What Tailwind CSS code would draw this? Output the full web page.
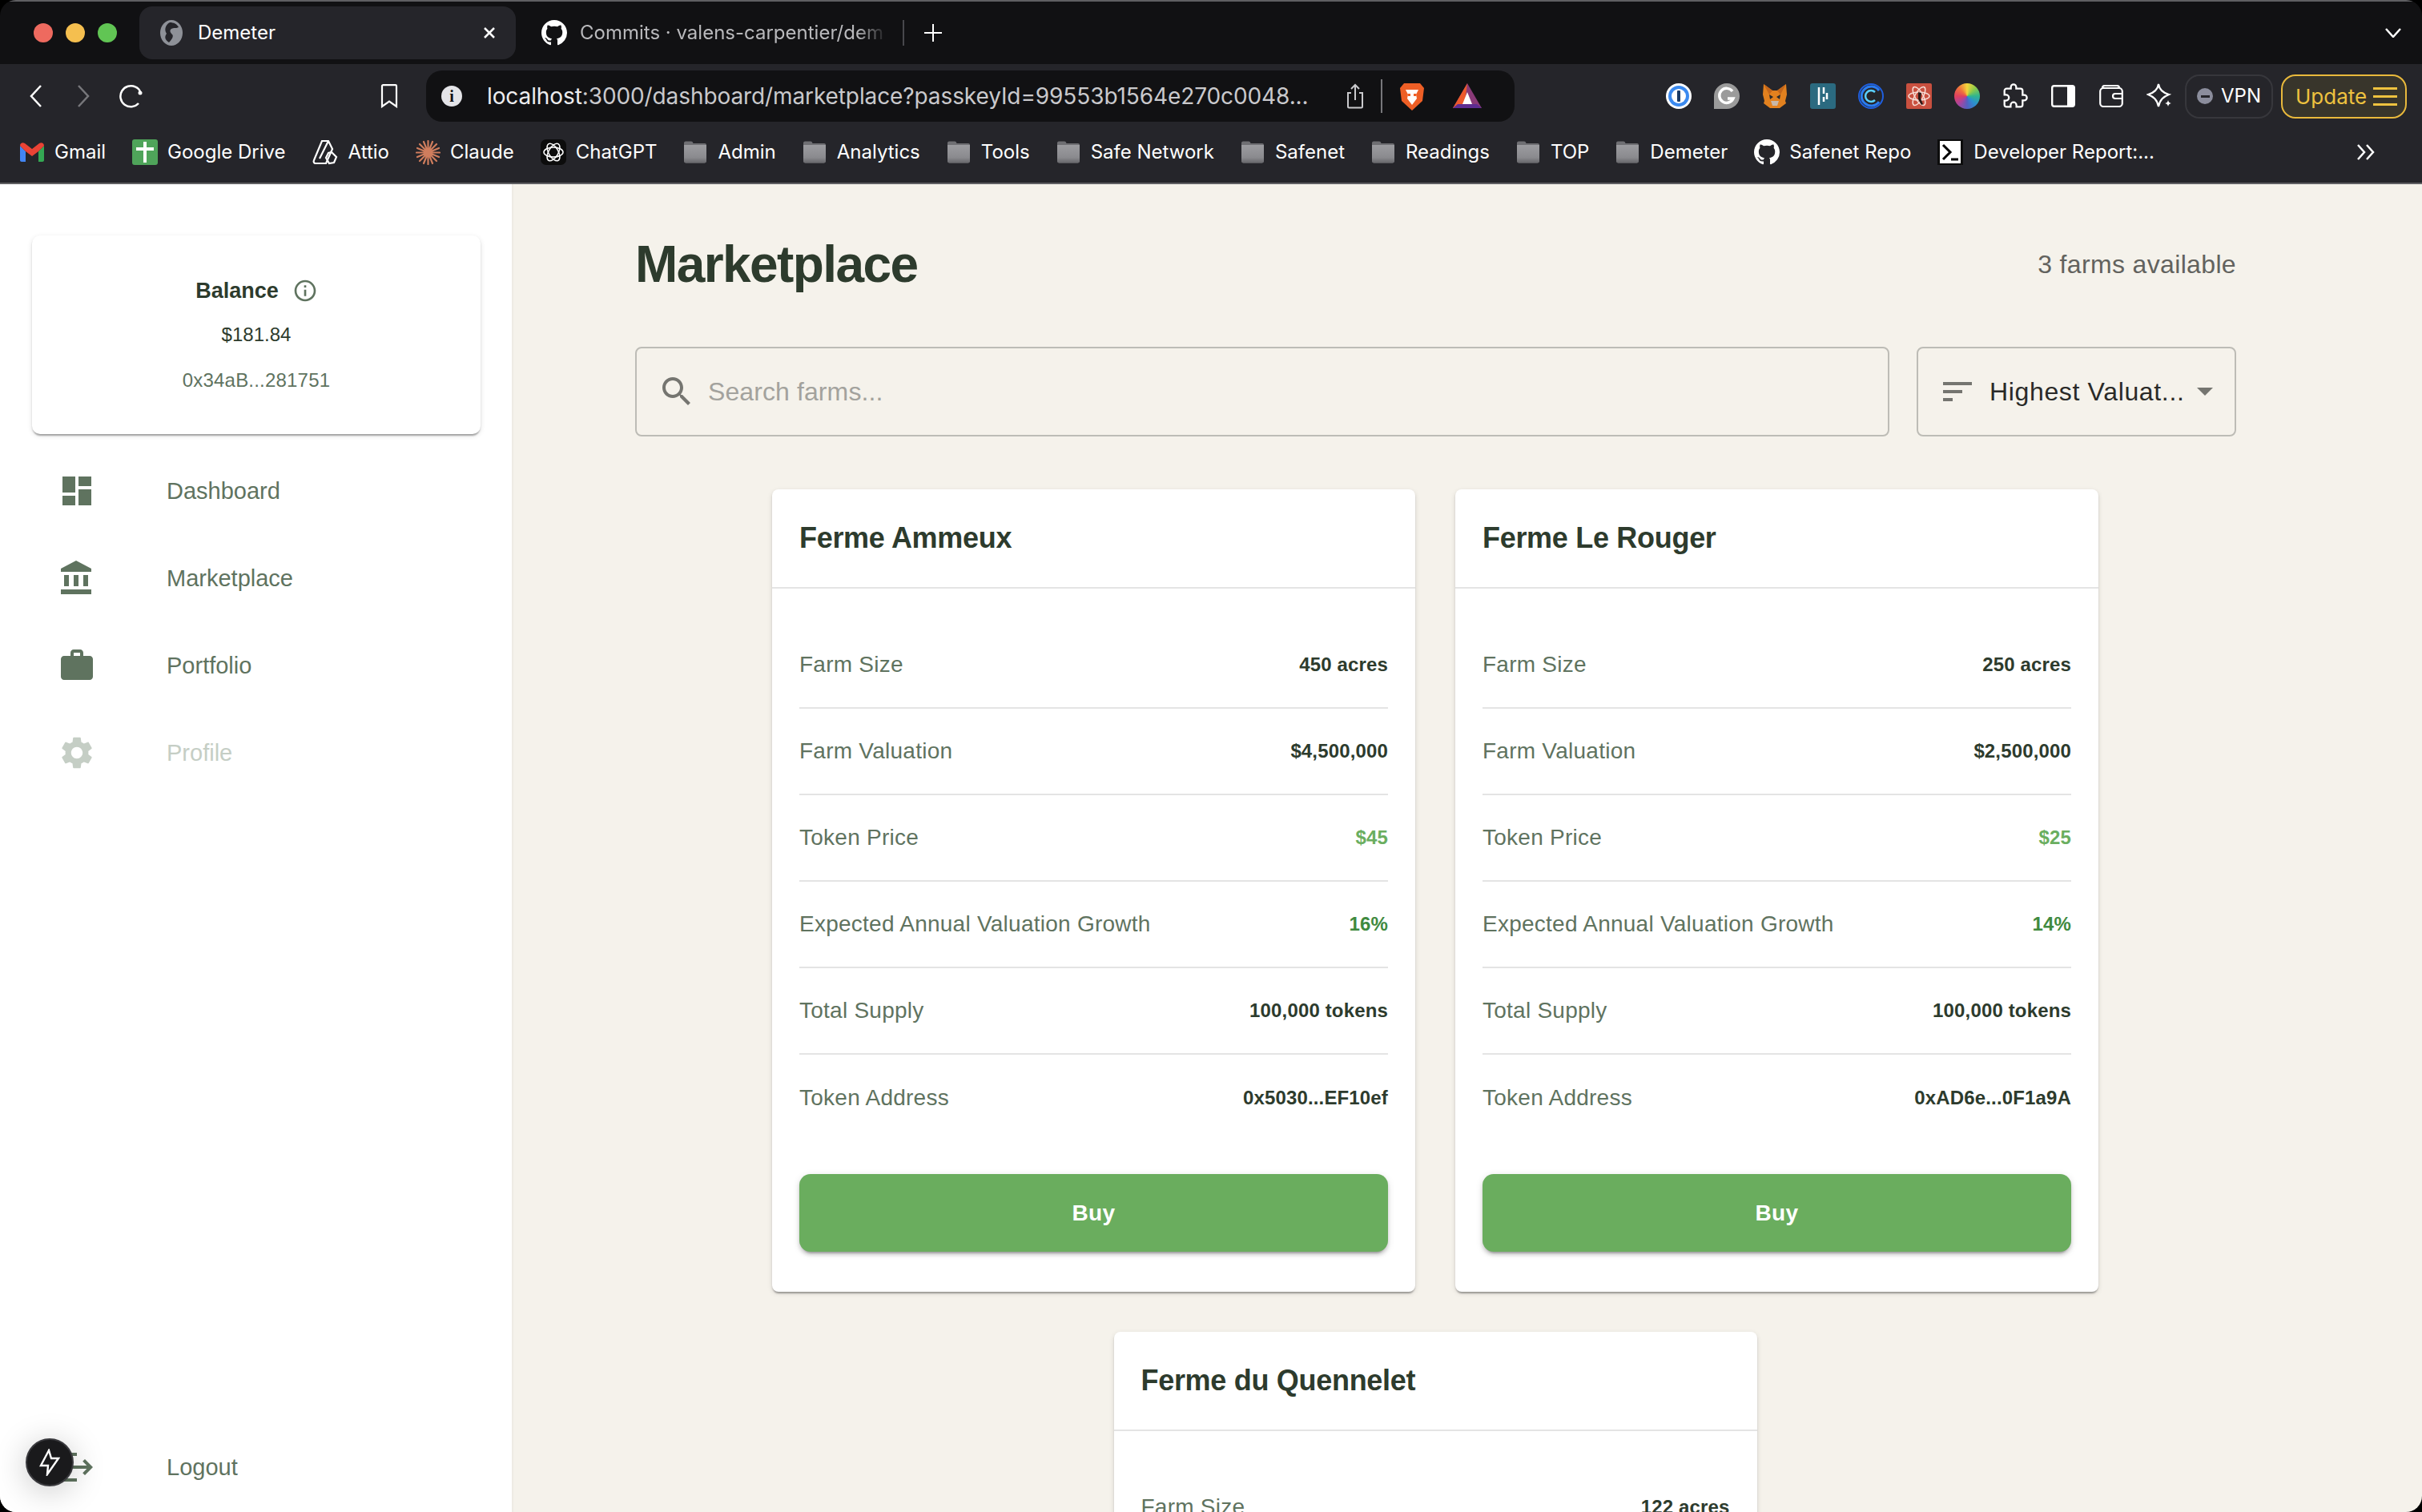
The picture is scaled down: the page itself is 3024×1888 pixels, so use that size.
<!DOCTYPE html>
<html lang="en">
<head>
    <meta charset="UTF-8">
    <title>Demeter</title>
    <script src="https://cdn.jsdelivr.net/npm/@tailwindcss/browser@4"></script>
</head>
<body class="bg-black w-[3024px] h-[1888px] overflow-hidden font-['Liberation_Sans',sans-serif]">
    <svg class="absolute w-0 h-0">
        <defs>
            <linearGradient id="folderFill" x1="0" y1="0" x2="0" y2="1">
                <stop offset="0" stop-color="#9c9ca0"/>
                <stop offset="0.7" stop-color="#8a8a8e"/>
                <stop offset="1" stop-color="#66666a"/>
            </linearGradient>
        </defs>
        <symbol id="folder" viewBox="0 0 30 30">
            <path d="M1 3.500c0-1.300 1-2 2-2h7c1.300 0 2 .8 2.500 2.500H27c1.200 0 2 .8 2 2v20c0 1.500-1 2.500-2.500 2.500h-23C2 28.500 1 27.500 1 26z" fill="#6f6f73"/>
            <path d="M1 6h28v20c0 1.500-1 2.500-2.500 2.500h-23C2 28.500 1 27.500 1 26z" fill="url(#folderFill)"/>
        </symbol>
        <symbol id="github" viewBox="0 0 16 16">
            <path fill="#fff" d="M8 0C3.580 0 0 3.580 0 8c0 3.540 2.290 6.530 5.470 7.590.4.070.55-.17.55-.38 0-.19-.01-.82-.01-1.490-2.010.37-2.530-.49-2.690-.94-.09-.23-.48-.94-.82-1.130-.28-.15-.68-.52-.01-.53.63-.01 1.080.58 1.230.82.72 1.210 1.870.87 2.330.66.07-.52.28-.87.51-1.070-1.780-.2-3.640-.89-3.640-3.950 0-.87.31-1.590.82-2.150-.08-.2-.36-1.020.08-2.120 0 0 .67-.21 2.200.82.64-.18 1.320-.27 2-.27s1.360.09 2 .27c1.530-1.040 2.200-.82 2.200-.82.44 1.100.16 1.920.08 2.120.51.56.82 1.270.82 2.150 0 3.070-1.870 3.750-3.650 3.950.29.25.54.73.54 1.480 0 1.070-.01 1.930-.01 2.200 0 .21.15.46.55.38A8.013 8.013 0 0016 8c0-4.420-3.580-8-8-8z"/>
        </symbol>
    </svg>

    <div class="w-full h-full rounded-[20px] overflow-hidden flex flex-col">
        <!-- tab strip -->
        <div class="h-[80px] bg-[#111113] border-t-2 border-[#5f5f62] flex items-center text-[24px] font-['Inter',sans-serif] shrink-0">
            <div class="flex gap-[16px] ml-[42px] w-[132px]">
                <span class="w-[24px] h-[24px] rounded-full bg-[#ee6a5f]"></span>
                <span class="w-[24px] h-[24px] rounded-full bg-[#f5bf4f]"></span>
                <span class="w-[24px] h-[24px] rounded-full bg-[#61c554]"></span>
            </div>
            <div class="w-[470px] h-[66px] bg-[#25252a] rounded-[16px] flex items-center text-white pl-[26px] pr-[24px]">
                <svg class="w-[28px] h-[32px]" viewBox="0 0 28 32"><ellipse cx="14" cy="16" rx="14" ry="16" fill="#8e9198"/><path d="M12 3c5 0 9 2 11 6-4 2-6 0-9 2-3 2-1 5 1 7s0 6-4 10C6 25 5 21 8 17 5 13 6 6 12 3z" fill="#25252a"/></svg>
                <span class="ml-[19px]">Demeter</span>
                <svg class="w-[18px] h-[18px] ml-auto" viewBox="0 0 18 18" fill="none" stroke="#fff" stroke-width="2.500"><path d="M3 3l12 12M15 3L3 15"/></svg>
            </div>
            <svg class="w-[32px] h-[32px] ml-[32px]"><use href="#github"/></svg>
            <span class="ml-[16px] w-[384px] overflow-hidden whitespace-nowrap text-[#b9b9bc] [mask-image:linear-gradient(90deg,#000_90%,transparent)]">Commits · valens-carpentier/dem</span>
            <div class="ml-[19px] w-[2px] h-[32px] bg-[#48484c]"></div>
            <svg class="w-[22px] h-[22px] ml-[25px]" viewBox="0 0 22 22" stroke="#fff" stroke-width="2"><path d="M11 0v22M0 11h22"/></svg>
            <svg class="w-[20px] h-[12px] ml-auto mr-[26px]" viewBox="0 0 20 12" fill="none" stroke="#fff" stroke-width="2.500"><path d="M1 1l9 10 9-10"/></svg>
        </div>

        <!-- toolbar -->
        <div class="h-[80px] bg-[#25252a] flex items-center shrink-0">
            <svg class="w-[16px] h-[28px] ml-[37px]" viewBox="0 0 16 28" fill="none" stroke="#fff" stroke-width="2.500"><path d="M14 1L2 14l12 13"/></svg>
            <svg class="w-[16px] h-[28px] ml-[43px]" viewBox="0 0 16 28" fill="none" stroke="#77777b" stroke-width="2.500"><path d="M2 1l12 13L2 27"/></svg>
            <svg class="w-[30px] h-[30px] ml-[37px]" viewBox="0 0 30 30" fill="none" stroke="#fff" stroke-width="2.500"><path d="M24 24A13 13 0 1 1 20 3.500"/><circle cx="26" cy="11" r="2.500" fill="#fff" stroke="none"/><path d="M20 3.500c3 1 6 4 6 7"/></svg>
            <svg class="w-[22px] h-[30px] ml-[296px]" viewBox="0 0 22 30" fill="none" stroke="#fff" stroke-width="2.200"><path d="M2 2.500c0-.8.6-1.300 1.300-1.300h15.400c.7 0 1.300.5 1.300 1.300V28l-9-6.500L2 28z"/></svg>
            <div class="ml-[35px] w-[1359px] h-[64px] bg-[#111113] rounded-[20px] flex items-center">
                <span class="ml-[19px] w-[26px] h-[26px] rounded-full bg-[#e4e4e8] text-[#111113] text-[20px] font-bold leading-[26px] text-center font-['Liberation_Serif',serif]">i</span>
                <span class="ml-[31px] text-[28px] tracking-[-0.100px] text-[#c9c9cc] font-['Inter',sans-serif] whitespace-nowrap"><span class="text-[#ececee]">localhost</span>:3000/dashboard/marketplace?passkeyId=99553b1564e270c0048...</span>
                <svg class="w-[24px] h-[32px] ml-auto" viewBox="0 0 24 32" fill="none" stroke="#c9c9cc" stroke-width="2"><path d="M7 12H3v17c0 1 .5 1.500 1.500 1.500h15c1 0 1.500-.5 1.500-1.500V12h-4M12 21V2M7 7l5-5 5 5"/></svg>
                <div class="w-[2px] h-[42px] bg-[#77777b] ml-[20px]"></div>
                <svg class="w-[32px] h-[36px] ml-[21px]" viewBox="0 0 32 36"><path d="M6 2h20l5 6-2 16-13 12L3 24 1 8z" fill="#ee5f26"/><path d="M8 10h16l-3 6 1 5-6 8-6-8 1-5z" fill="#fff"/><path d="M11 15h3v3h-3zM18 15h3v3h-3z" fill="#ee5f26"/></svg>
                <svg class="w-[38px] h-[32px] ml-[34px] mr-[40px]" viewBox="0 0 38 32"><path d="M19 0L1 31h36z" fill="#8a3a78"/><path d="M19 0L1 31h14z" fill="#ec5a2c"/><path d="M1 31l6-5h24l6 5z" fill="#5e2d91"/><path d="M19 11l6 15H13z" fill="#fff"/></svg>
            </div>
            <div class="ml-auto flex items-center mr-[19px]">
                <div class="flex items-center gap-[28px]">
                    <svg class="w-[32px] h-[32px]" viewBox="0 0 32 32"><circle cx="16" cy="16" r="16" fill="#fff"/><circle cx="16" cy="16" r="13" fill="#3b8af0"/><circle cx="16" cy="16" r="9" fill="#fff"/><rect x="14" y="9" width="4" height="14" rx="1" fill="#1a3a66"/></svg>
                    <svg class="w-[32px] h-[32px]" viewBox="0 0 32 32"><path d="M16 0a16 16 0 0 1 0 32H0V16A16 16 0 0 1 16 0z" fill="#9b9b9b"/><path d="M23 10a9 9 0 1 0 1 9h-7" fill="none" stroke="#fff" stroke-width="3.500"/></svg>
                    <svg class="w-[32px] h-[32px]" viewBox="0 0 32 32"><path d="M2 1l11 8h6l11-8 1 13-2 8 1 3-8 6H10l-8-6 1-3-2-8z" fill="#e2811f"/><path d="M9 14l5 3-4 3zM23 14l-5 3 4 3z" fill="#2a2a2a"/><path d="M11 22h10l-2 6h-6z" fill="#c9b8a8"/><path d="M2 1l11 8-4 5zM30 1L19 9l4 5z" fill="#c4661b"/></svg>
                    <svg class="w-[32px] h-[32px]" viewBox="0 0 32 32"><rect width="32" height="32" rx="3" fill="#2b6a80"/><path d="M11 5v22M17 5v8M17 17v6M21 12v8" stroke="#fff" stroke-width="2.500"/></svg>
                    <svg class="w-[32px] h-[32px]" viewBox="0 0 32 32" fill="none"><circle cx="16" cy="16" r="15" stroke="#1f5fe0" stroke-width="2"/><path d="M26 9a12 12 0 1 0 0 14" stroke="#2a7cf0" stroke-width="3"/><path d="M21 11a7 7 0 1 0 0 10" stroke="#5bd0ff" stroke-width="2.500"/></svg>
                    <svg class="w-[32px] h-[32px]" viewBox="0 0 32 32"><rect width="32" height="32" rx="2" fill="#c9503f"/><g fill="none" stroke="#f6dcd5" stroke-width="1.500"><ellipse cx="16" cy="16" rx="13" ry="5"/><ellipse cx="16" cy="16" rx="13" ry="5" transform="rotate(60 16 16)"/><ellipse cx="16" cy="16" rx="13" ry="5" transform="rotate(120 16 16)"/></g><path d="M15 11l4 1-1 7 3 7-2 1-4-7z" fill="#2a1a18"/></svg>
                    <div class="w-[32px] h-[32px] rounded-full bg-[conic-gradient(#f5d63c,#8ecb4a,#2fb58f,#2b8ed0,#5560c0,#a845a0,#e0405f,#f0733c,#f5d63c)]"></div>
                    <svg class="w-[32px] h-[32px]" viewBox="0 0 24 24" fill="none" stroke="#fff" stroke-width="1.700"><path d="M20.500 11H19V7c0-1.100-.9-2-2-2h-4V3.500C13 2.120 11.880 1 10.500 1S8 2.120 8 3.500V5H4c-1.100 0-1.990.9-1.990 2v3.800H3.500c1.490 0 2.700 1.210 2.700 2.700s-1.210 2.700-2.700 2.700H2V20c0 1.100.9 2 2 2h3.800v-1.500c0-1.490 1.210-2.700 2.700-2.700 1.490 0 2.700 1.210 2.700 2.700V22H17c1.100 0 2-.9 2-2v-4h1.500c1.380 0 2.500-1.120 2.500-2.500S21.880 11 20.500 11z"/></svg>
                    <svg class="w-[32px] h-[28px]" viewBox="0 0 30 28"><rect x="1.200" y="1.200" width="27.600" height="25.600" rx="2.500" fill="none" stroke="#fff" stroke-width="2.400"/><rect x="20" y="1" width="9" height="26" fill="#fff"/></svg>
                    <svg class="w-[32px] h-[28px]" viewBox="0 0 30 28" fill="none" stroke="#fff" stroke-width="2.200"><rect x="1.200" y="4" width="27.600" height="23" rx="4"/><path d="M4 4c0-2 1-3 3-3h15c2 0 3 1 3 3M29 11h-9c-2 0-3 1-3 3s1 3 3 3h9"/></svg>
                    <svg class="w-[32px] h-[32px]" viewBox="0 0 32 32" fill="none" stroke="#fff" stroke-width="2.200"><path d="M15 1C16 8 21 12 28 14 21 17 17 20 15 29 13 20 9 17 2 14 9 12 14 8 15 1z"/><path d="M27 21c.5 2.500 1.500 3.500 4 4-2.500.5-3.500 1.500-4 4-.5-2.500-1.500-3.500-4-4 2.500-.5 3.500-1.500 4-4z" fill="#fff" stroke="none"/></svg>
                </div>
                <div class="ml-[16px] w-[110px] h-[55px] rounded-[18px] border-2 border-[#37373c] flex items-center text-white text-[24px] font-['Inter',sans-serif]">
                    <span class="ml-[13px] w-[20px] h-[20px] rounded-full bg-[#8b8d9c] flex items-center justify-center"><span class="w-[11px] h-[3px] bg-[#25252a]"></span></span>
                    <span class="ml-[10px]">VPN</span>
                </div>
                <div class="ml-[10px] w-[157px] h-[55px] rounded-[18px] border-2 border-[#e9b93c] bg-[#38352b] flex items-center text-[#eec23f] text-[26px] font-['Inter',sans-serif]">
                    <span class="ml-[16px]">Update</span>
                    <span class="ml-[8px] flex flex-col gap-[7px]"><span class="w-[30px] h-[3px] bg-[#eec23f]"></span><span class="w-[30px] h-[3px] bg-[#eec23f]"></span><span class="w-[30px] h-[3px] bg-[#eec23f]"></span></span>
                </div>
            </div>
        </div>

        <!-- bookmarks -->
        <div class="h-[70px] bg-[#25252a] border-b-2 border-[#5f5f62] flex items-center pl-[25px] pb-[8px] gap-[33px] text-[24px] text-white font-['Inter',sans-serif] whitespace-nowrap shrink-0">
            <div class="flex items-center gap-[13px]">
                <svg class="w-[30px] h-[24px]" viewBox="0 0 30 24"><path d="M0 4v18c0 1 .8 2 2 2h5V11z" fill="#4285f4"/><path d="M23 11v13h5c1.200 0 2-1 2-2V4z" fill="#34a853"/><path d="M7 11L0 4c0-3 3-5 6-3l9 7 9-7c3-2 6 0 6 3l-7 7-8 6z" fill="#ea4335"/></svg>
                <span>Gmail</span>
            </div>
            <div class="flex items-center gap-[12px]">
                <svg class="w-[32px] h-[32px]" viewBox="0 0 32 32"><rect width="32" height="32" rx="3" fill="#4fa45a"/><path d="M16 3v26M5 12h22" stroke="#fff" stroke-width="4"/></svg>
                <span>Google Drive</span>
            </div>
            <div class="flex items-center gap-[13px]">
                <svg class="w-[32px] h-[32px]" viewBox="0 0 32 32" fill="none" stroke="#fff" stroke-width="2.200"><path d="M12 2h8l5 10-8 18H4c-2 0-3-2-2-4z"/><path d="M20 2L9 24M24 16l6 6-3 7-6 1-4-7 3-6z"/></svg>
                <span>Attio</span>
            </div>
            <div class="flex items-center gap-[12px]">
                <svg class="w-[31px] h-[31px]" viewBox="0 0 31 31" stroke="#cf7d5d" stroke-width="2.200" stroke-linecap="round"><path d="M15.500 1v29M1 15.500h29M5 5l21 21M26 5L5 26M10 2l11 27M21 2L10 29M2 10l27 11M29 10L2 21"/></svg>
                <span>Claude</span>
            </div>
            <div class="flex items-center gap-[12px]">
                <svg class="w-[32px] h-[32px]" viewBox="0 0 32 32"><rect width="32" height="32" rx="7" fill="#0c0c0c"/><g fill="none" stroke="#fff" stroke-width="1.500"><ellipse cx="16" cy="16" rx="12" ry="6"/><ellipse cx="16" cy="16" rx="12" ry="6" transform="rotate(60 16 16)"/><ellipse cx="16" cy="16" rx="12" ry="6" transform="rotate(120 16 16)"/></g></svg>
                <span>ChatGPT</span>
            </div>
            <div class="flex items-center gap-[13px]"><svg class="w-[30px] h-[30px]"><use href="#folder"/></svg><span>Admin</span></div>
            <div class="flex items-center gap-[13px]"><svg class="w-[30px] h-[30px]"><use href="#folder"/></svg><span>Analytics</span></div>
            <div class="flex items-center gap-[13px]"><svg class="w-[30px] h-[30px]"><use href="#folder"/></svg><span>Tools</span></div>
            <div class="flex items-center gap-[13px]"><svg class="w-[30px] h-[30px]"><use href="#folder"/></svg><span>Safe Network</span></div>
            <div class="flex items-center gap-[13px]"><svg class="w-[30px] h-[30px]"><use href="#folder"/></svg><span>Safenet</span></div>
            <div class="flex items-center gap-[13px]"><svg class="w-[30px] h-[30px]"><use href="#folder"/></svg><span>Readings</span></div>
            <div class="flex items-center gap-[13px]"><svg class="w-[30px] h-[30px]"><use href="#folder"/></svg><span>TOP</span></div>
            <div class="flex items-center gap-[13px]"><svg class="w-[30px] h-[30px]"><use href="#folder"/></svg><span>Demeter</span></div>
            <div class="flex items-center gap-[12px]"><svg class="w-[32px] h-[32px]"><use href="#github"/></svg><span>Safenet Repo</span></div>
            <div class="flex items-center gap-[13px]">
                <svg class="w-[32px] h-[32px]" viewBox="0 0 32 32"><rect width="32" height="32" fill="#0c0c0c"/><path d="M3 2h26v28H3z" fill="#fff"/><path d="M7 7l9 9-9 9" fill="none" stroke="#000" stroke-width="3"/><path d="M17 25h9" stroke="#000" stroke-width="3"/></svg>
                <span>Developer Report:...</span>
            </div>
            <svg class="w-[24px] h-[20px] ml-auto mr-[58px]" viewBox="0 0 24 20" fill="none" stroke="#fff" stroke-width="2.500"><path d="M2 1l8 9-8 9M13 1l8 9-8 9"/></svg>
        </div>

        <!-- app -->
        <div class="flex flex-1 min-h-0 bg-[#f5f2eb]">
            <aside class="relative w-[641px] bg-white border-r-2 border-[#eeebe4] flex flex-col pt-[64px] shrink-0">
                <div class="mx-[40px] w-[560px] h-[248px] bg-white rounded-[10px] flex flex-col items-center pt-[49px] shadow-[0_4px_2px_-2px_rgba(0,0,0,0.2),0_2px_2px_0_rgba(0,0,0,0.14),0_2px_6px_0_rgba(0,0,0,0.12)]">
                    <div class="h-[40px] flex items-center gap-[17px] ml-[1px]">
                        <span class="text-[27px] font-bold text-[#2d3b2d]">Balance</span>
                        <svg class="w-[32px] h-[32px]" viewBox="0 0 24 24" fill="#5f735f"><path d="M11 7h2v2h-2zm0 4h2v6h-2zm1-9C6.480 2 2 6.480 2 12s4.480 10 10 10 10-4.480 10-10S17.520 2 12 2zm0 18c-4.410 0-8-3.590-8-8s3.590-8 8-8 8 3.590 8 8-3.590 8-8 8z"/></svg>
                    </div>
                    <div class="mt-[18px] h-[34px] leading-[34px] text-[24px] text-[#2d3b2d]">$181.84</div>
                    <div class="mt-[23px] h-[34px] leading-[34px] text-[24px] tracking-[0.200px] text-[#5f735f]">0x34aB...281751</div>
                </div>
                <nav class="mt-[16px] flex flex-col text-[#5f735f] text-[29px]">
                    <div class="h-[109px] flex items-center pl-[72px] gap-[88px]">
                        <svg class="w-[48px] h-[48px]" viewBox="0 0 24 24" fill="#5f735f"><path d="M3 13h8V3H3v10zm0 8h8v-6H3v6zm10 0h8V11h-8v10zm0-18v6h8V3h-8z"/></svg>
                        <span class="pt-[2px]">Dashboard</span>
                    </div>
                    <div class="h-[109px] flex items-center pl-[72px] gap-[88px]">
                        <svg class="w-[48px] h-[48px]" viewBox="0 0 24 24" fill="#5f735f"><path d="M4 10v7h3v-7H4zm6 0v7h3v-7h-3zM2 22h19v-3H2v3zm14-12v7h3v-7h-3zm-4.500-9L2 6v2h19V6l-9.500-5z"/></svg>
                        <span class="pt-[2px]">Marketplace</span>
                    </div>
                    <div class="h-[109px] flex items-center pl-[72px] gap-[88px]">
                        <svg class="w-[48px] h-[48px]" viewBox="0 0 24 24" fill="#5f735f"><path d="M20 6h-4V4c0-1.110-.89-2-2-2h-4c-1.110 0-2 .89-2 2v2H4c-1.110 0-1.990.89-1.990 2L2 19c0 1.110.89 2 2 2h16c1.110 0 2-.89 2-2V8c0-1.110-.89-2-2-2zm-6 0h-4V4h4v2z"/></svg>
                        <span class="pt-[2px]">Portfolio</span>
                    </div>
                    <div class="h-[109px] flex items-center pl-[72px] gap-[88px] text-[#c5cec5]">
                        <svg class="w-[48px] h-[48px]" viewBox="0 0 24 24" fill="#c5cec5"><path d="M19.140 12.940c.04-.3.06-.61.06-.94 0-.32-.02-.64-.07-.94l2.030-1.580c.18-.14.23-.41.12-.61l-1.920-3.320c-.12-.22-.37-.29-.59-.22l-2.390.96c-.5-.38-1.030-.7-1.620-.94l-.36-2.540c-.04-.24-.24-.41-.48-.41h-3.840c-.24 0-.43.17-.47.41l-.36 2.540c-.59.24-1.130.57-1.620.94l-2.390-.96c-.22-.08-.47 0-.59.22L2.740 8.870c-.12.21-.08.47.12.61l2.030 1.580c-.05.3-.09.63-.09.94s.02.64.07.94l-2.030 1.580c-.18.14-.23.41-.12.61l1.920 3.320c.12.22.37.29.59.22l2.390-.96c.5.38 1.030.7 1.620.94l.36 2.540c.05.24.24.41.48.41h3.840c.24 0 .44-.17.47-.41l.36-2.540c.59-.24 1.130-.56 1.620-.94l2.390.96c.22.08.47 0 .59-.22l1.920-3.320c.12-.22.07-.47-.12-.61l-2.010-1.580zM12 15.600c-1.980 0-3.600-1.620-3.600-3.600s1.620-3.600 3.600-3.600 3.600 1.620 3.600 3.600-1.620 3.600-3.600 3.600z"/></svg>
                        <span class="pt-[2px]">Profile</span>
                    </div>
                </nav>
                <div class="mt-auto mb-[2px] h-[109px] flex items-center pl-[72px] gap-[88px] text-[#5f735f] text-[29px]">
                    <svg class="w-[48px] h-[48px]" viewBox="0 0 24 24" fill="#5f735f"><path d="M17 7l-1.410 1.410L18.170 11H8v2h10.170l-2.580 2.580L17 17l5-5zM4 5h8V3H4c-1.100 0-2 .9-2 2v14c0 1.100.9 2 2 2h8v-2H4V5z"/></svg>
                    <span class="pt-[2px]">Logout</span>
                </div>
                <!-- floating dev tools button -->
                <div class="absolute left-[32px] bottom-[32px] w-[60px] h-[60px] rounded-full bg-[#1a1a1c] border-2 border-[#3a3a3e] flex items-center justify-center shadow-[0_6px_40px_rgba(0,0,0,0.22)]">
                    <svg class="w-[26px] h-[34px]" viewBox="0 0 26 34" fill="none" stroke="#fff" stroke-width="2.400" stroke-linejoin="miter"><path d="M12 2L2 21h9l-1 11 14-20h-9z"/></svg>
                </div>
            </aside>

            <main class="flex-1 min-w-0 pl-[152px] pr-[232px] pt-[60px] overflow-hidden">
                <div class="h-[80px] flex items-center justify-between">
                    <h1 class="text-[64px] font-bold tracking-[-1.600px] text-[#2d3b2d]">Marketplace</h1>
                    <span class="text-[32px] tracking-[0.350px] text-[#62625e]">3 farms available</span>
                </div>

                <div class="mt-[63px] flex gap-[34px]">
                    <div class="flex-1 h-[112px] border-2 border-[#bdbcb6] rounded-[8px] flex items-center pl-[34px]">
                        <svg class="w-[48px] h-[48px] shrink-0 ml-[-8px]" viewBox="0 0 24 24" fill="#757570"><path d="M15.500 14h-.79l-.28-.27C15.410 12.590 16 11.110 16 9.500 16 5.910 13.090 3 9.500 3S3 5.910 3 9.500 5.910 16 9.500 16c1.610 0 3.090-.59 4.230-1.570l.27.28v.79l5 4.990L20.490 19l-4.990-5zm-6 0C7.010 14 5 11.990 5 9.500S7.010 5 9.500 5 14 7.010 14 9.500 11.990 14 9.500 14z"/></svg>
                        <input type="text" placeholder="Search farms..." class="ml-[15px] flex-1 bg-transparent outline-none text-[32px] tracking-[0.100px] placeholder:text-[#a3a29d]">
                    </div>
                    <div class="w-[399px] h-[112px] border-2 border-[#bdbcb6] rounded-[8px] flex items-center pl-[31px] text-[32px] text-[#2a2a28] tracking-[0.650px]">
                        <svg class="w-[48px] h-[48px] shrink-0 ml-[-6px]" viewBox="0 0 24 24" fill="#757570"><path d="M3 18h6v-2H3v2zM3 6v2h18V6H3zm0 7h12v-2H3v2z"/></svg>
                        <span class="ml-[16px] whitespace-nowrap">Highest Valuat...</span>
                        <svg class="w-[20px] h-[10px] ml-[16px]" viewBox="0 0 20 10" fill="#757570"><path d="M0 0h20L10 10z"/></svg>
                    </div>
                </div>

                <div class="mt-[66px] mr-[1px] flex flex-wrap justify-center gap-[50px]">
                    <!-- Ferme Ammeux -->
                    <div class="w-[803px] bg-white rounded-[8px] shadow-[0_4px_2px_-2px_rgba(0,0,0,0.2),0_2px_2px_0_rgba(0,0,0,0.14),0_2px_6px_0_rgba(0,0,0,0.12)]">
                        <div class="h-[124px] border-b-2 border-[#e4e4e4] flex items-center px-[34px] text-[36px] font-bold tracking-[-0.300px] text-[#2d3b2d]">Ferme Ammeux</div>
                        <div class="pt-[42px] px-[34px] pb-[50px]">
                            <div class="h-[108px] border-b-2 border-[#e4e4e4] flex items-center justify-between text-[28px] tracking-[0.250px] text-[#5f735f]"><span>Farm Size</span><span class="text-[24px] tracking-[0.150px] font-bold text-[#2d3b2d]">450 acres</span></div>
                            <div class="h-[108px] border-b-2 border-[#e4e4e4] flex items-center justify-between text-[28px] tracking-[0.250px] text-[#5f735f]"><span>Farm Valuation</span><span class="text-[24px] tracking-[0.150px] font-bold text-[#2d3b2d]">$4,500,000</span></div>
                            <div class="h-[108px] border-b-2 border-[#e4e4e4] flex items-center justify-between text-[28px] tracking-[0.250px] text-[#5f735f]"><span>Token Price</span><span class="text-[24px] tracking-[0.150px] font-bold text-[#6aae5f]">$45</span></div>
                            <div class="h-[108px] border-b-2 border-[#e4e4e4] flex items-center justify-between text-[28px] tracking-[0.250px] text-[#5f735f]"><span>Expected Annual Valuation Growth</span><span class="text-[24px] tracking-[0.150px] font-bold text-[#3f8a3f]">16%</span></div>
                            <div class="h-[108px] border-b-2 border-[#e4e4e4] flex items-center justify-between text-[28px] tracking-[0.250px] text-[#5f735f]"><span>Total Supply</span><span class="text-[24px] tracking-[0.150px] font-bold text-[#2d3b2d]">100,000 tokens</span></div>
                            <div class="h-[108px] flex items-center justify-between text-[28px] tracking-[0.250px] text-[#5f735f]"><span>Token Address</span><span class="text-[24px] tracking-[0.150px] font-bold text-[#2d3b2d]">0x5030...EF10ef</span></div>
                            <button class="mt-[41px] w-full h-[97px] rounded-[14px] bg-[#6aad5e] text-white text-[28px] font-bold tracking-[0.400px] shadow-[0_6px_2px_-4px_rgba(0,0,0,0.2),0_4px_4px_0_rgba(0,0,0,0.14),0_2px_10px_0_rgba(0,0,0,0.12)]">Buy</button>
                        </div>
                    </div>
                    <!-- Ferme Le Rouger -->
                    <div class="w-[803px] bg-white rounded-[8px] shadow-[0_4px_2px_-2px_rgba(0,0,0,0.2),0_2px_2px_0_rgba(0,0,0,0.14),0_2px_6px_0_rgba(0,0,0,0.12)]">
                        <div class="h-[124px] border-b-2 border-[#e4e4e4] flex items-center px-[34px] text-[36px] font-bold tracking-[-0.300px] text-[#2d3b2d]">Ferme Le Rouger</div>
                        <div class="pt-[42px] px-[34px] pb-[50px]">
                            <div class="h-[108px] border-b-2 border-[#e4e4e4] flex items-center justify-between text-[28px] tracking-[0.250px] text-[#5f735f]"><span>Farm Size</span><span class="text-[24px] tracking-[0.150px] font-bold text-[#2d3b2d]">250 acres</span></div>
                            <div class="h-[108px] border-b-2 border-[#e4e4e4] flex items-center justify-between text-[28px] tracking-[0.250px] text-[#5f735f]"><span>Farm Valuation</span><span class="text-[24px] tracking-[0.150px] font-bold text-[#2d3b2d]">$2,500,000</span></div>
                            <div class="h-[108px] border-b-2 border-[#e4e4e4] flex items-center justify-between text-[28px] tracking-[0.250px] text-[#5f735f]"><span>Token Price</span><span class="text-[24px] tracking-[0.150px] font-bold text-[#6aae5f]">$25</span></div>
                            <div class="h-[108px] border-b-2 border-[#e4e4e4] flex items-center justify-between text-[28px] tracking-[0.250px] text-[#5f735f]"><span>Expected Annual Valuation Growth</span><span class="text-[24px] tracking-[0.150px] font-bold text-[#3f8a3f]">14%</span></div>
                            <div class="h-[108px] border-b-2 border-[#e4e4e4] flex items-center justify-between text-[28px] tracking-[0.250px] text-[#5f735f]"><span>Total Supply</span><span class="text-[24px] tracking-[0.150px] font-bold text-[#2d3b2d]">100,000 tokens</span></div>
                            <div class="h-[108px] flex items-center justify-between text-[28px] tracking-[0.250px] text-[#5f735f]"><span>Token Address</span><span class="text-[24px] tracking-[0.150px] font-bold text-[#2d3b2d]">0xAD6e...0F1a9A</span></div>
                            <button class="mt-[41px] w-full h-[97px] rounded-[14px] bg-[#6aad5e] text-white text-[28px] font-bold tracking-[0.400px] shadow-[0_6px_2px_-4px_rgba(0,0,0,0.2),0_4px_4px_0_rgba(0,0,0,0.14),0_2px_10px_0_rgba(0,0,0,0.12)]">Buy</button>
                        </div>
                    </div>
                    <!-- Ferme du Quennelet -->
                    <div class="w-[803px] bg-white rounded-[8px] shadow-[0_4px_2px_-2px_rgba(0,0,0,0.2),0_2px_2px_0_rgba(0,0,0,0.14),0_2px_6px_0_rgba(0,0,0,0.12)]">
                        <div class="h-[124px] border-b-2 border-[#e4e4e4] flex items-center px-[34px] text-[36px] font-bold tracking-[-0.300px] text-[#2d3b2d]">Ferme du Quennelet</div>
                        <div class="pt-[42px] px-[34px] pb-[50px]">
                            <div class="h-[108px] border-b-2 border-[#e4e4e4] flex items-center justify-between text-[28px] tracking-[0.250px] text-[#5f735f]"><span>Farm Size</span><span class="text-[24px] tracking-[0.150px] font-bold text-[#2d3b2d]">122 acres</span></div>
                        </div>
                    </div>
                </div>
            </main>
        </div>
    </div>
</body>
</html>
